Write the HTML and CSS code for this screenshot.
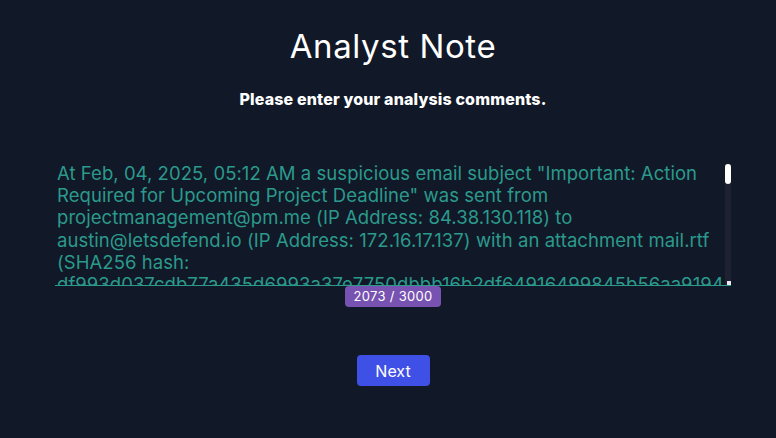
FILE: index.html
```html
<!DOCTYPE html>
<html lang="en">
<head>
  <meta charset="UTF-8">
  <meta name="viewport" content="width=device-width, initial-scale=1.0">
  <title>Analyst Note</title>
  <link rel="stylesheet" href="styles.css">
</head>
<body>
  <div class="container">
    <h1>Analyst Note</h1>
    <p class="subtitle">Please enter your analysis comments.</p>

    <div class="note-wrap">
      <textarea class="note" id="note" spellcheck="false">At Feb, 04, 2025, 05:12 AM a suspicious email subject "Important: Action Required for Upcoming Project Deadline" was sent from projectmanagement@pm.me (IP Address: 84.38.130.118) to austin@letsdefend.io (IP Address: 172.16.17.137) with an attachment mail.rtf (SHA256 hash: df993d037cdb77a435d6993a37e7750dbbb16b2df64916499845b56aa9194184). The attachment was opened by the user and the rtf document exploited CVE-2017-11882 to download a second stage payload from a remote host. The endpoint was contained and the malicious email was deleted from the mailbox.</textarea>
      <div class="scrollbar">
        <div class="thumb"></div>
        <div class="arrow"></div>
      </div>
    </div>
    <span class="counter" id="counter">2073 / 3000</span>

    <button class="next">Next</button>
  </div>
</body>
</html>
```

FILE: styles.css
```css
html, body {
  margin: 0;
  padding: 0;
  background: #111827;
}
body {
  font-family: Inter, 'Open Sans', sans-serif;
  color: #fff;
}
.container {
  display: flex;
  flex-direction: column;
  align-items: center;
  padding: 25px 0 0 10px;
}
h1 {
  margin: 0;
  font-size: 33px;
  font-weight: 400;
  line-height: 42px;
  letter-spacing: 0.6px;
}
.subtitle {
  margin: 22px 0 0;
  font-size: 16px;
  font-weight: 800;
  line-height: 20px;
  letter-spacing: 0.15px;
}
.note-wrap {
  position: relative;
  margin-top: 52px;
}
.note {
  display: block;
  box-sizing: border-box;
  width: 676px;
  height: 125px;
  padding: 1px 6px 0 2px;
  background: transparent;
  color: #2b9a8c;
  border: none;
  border-bottom: 1px solid #2b9a8c;
  font-family: inherit;
  font-size: 18.5px;
  line-height: 22.2px;
  letter-spacing: 0.05px;
  resize: none;
  outline: none;
  overflow: hidden;
}
.scrollbar {
  position: absolute;
  top: 3px;
  right: 0;
  bottom: 1px;
  width: 6px;
  background: #1d2132;
}
.thumb {
  height: 20px;
  background: #fff;
  border-radius: 3px;
}
.arrow {
  position: absolute;
  right: 0;
  bottom: 0;
  width: 4px;
  height: 4px;
  background: #e8e8ee;
}
.counter {
  padding: 0 9px;
  background: #7752b1;
  border-radius: 4px;
  font-size: 13px;
  line-height: 21px;
  letter-spacing: 0.3px;
}
.next {
  margin-top: 48px;
  width: 73px;
  height: 31px;
  background: #3f50e6;
  color: #fff;
  border: none;
  border-radius: 4px;
  font-family: inherit;
  font-size: 16px;
  cursor: pointer;
}
```
